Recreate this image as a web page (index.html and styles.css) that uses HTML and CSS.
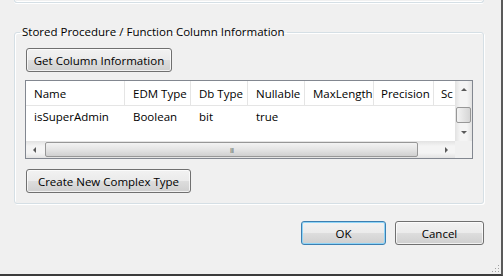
FILE: index.html
```html
<!DOCTYPE html>
<html lang="en">
<head>
    <meta charset="UTF-8">
    <title>Function Import</title>
    <link rel="stylesheet" href="styles.css">
</head>
<body>
    <div class="window">
        <div class="prev-group"></div>

        <fieldset class="group">
            <legend>Stored Procedure / Function Column Information</legend>
            <button class="btn btn-get">Get Column Information</button>

            <div class="grid">
                <div class="grid-main">
                    <div class="grid-view">
                        <div class="row header">
                            <div class="cell">Name</div>
                            <div class="cell">EDM Type</div>
                            <div class="cell">Db Type</div>
                            <div class="cell">Nullable</div>
                            <div class="cell">MaxLength</div>
                            <div class="cell">Precision</div>
                            <div class="cell">Sc</div>
                        </div>
                        <div class="row">
                            <div class="cell">isSuperAdmin</div>
                            <div class="cell">Boolean</div>
                            <div class="cell">bit</div>
                            <div class="cell">true</div>
                            <div class="cell"></div>
                            <div class="cell"></div>
                            <div class="cell"></div>
                        </div>
                    </div>
                    <div class="vscroll">
                        <div class="arrow up"></div>
                        <div class="vtrack"><div class="vthumb"></div></div>
                        <div class="arrow down"></div>
                    </div>
                </div>
                <div class="hscroll-row">
                    <div class="hscroll">
                        <div class="arrow left"></div>
                        <div class="htrack"><div class="hthumb">III</div></div>
                        <div class="arrow right"></div>
                    </div>
                    <div class="corner"></div>
                </div>
            </div>

            <button class="btn btn-create">Create New Complex Type</button>
        </fieldset>

        <div class="actions">
            <button class="btn btn-ok">OK</button>
            <button class="btn btn-cancel">Cancel</button>
        </div>

        <div class="grip"></div>
    </div>
</body>
</html>
```

FILE: styles.css
```css
body {
    margin: 0;
    background: #6b6b6b;
    font-family: "Open Sans", "Noto Sans", sans-serif;
    font-size: 11.5px;
    color: #000;
}
.window {
    position: relative;
    width: 470px;
    height: 274px;
    padding: 0 17px 0 14px;
    background: #f0f0f0;
    border-right: 2px solid #5a5a5a;
    border-bottom: 2px solid #3c3c3c;
}
.prev-group {
    height: 2px;
    border: 1px solid #d5dfe5;
    border-top: none;
    border-radius: 0 0 3px 3px;
    box-shadow: 0 1px 0 #fff, inset 0 -1px 0 #fff;
}
.group {
    min-width: 0;
    margin: 21px 0 0 0;
    padding: 0 10px 10px 10px;
    border: 1px solid #d5dfe5;
    border-radius: 3px;
    box-shadow: inset 1px 1px 0 #fff, 1px 1px 0 #fff;
}
.group legend {
    margin-left: -5px;
    padding: 0 2px;
    line-height: 16px;
}
.btn {
    display: flex;
    align-items: center;
    justify-content: center;
    height: 24px;
    padding: 0;
    font-family: inherit;
    font-size: inherit;
    color: #000;
    border: 1px solid #707070;
    border-radius: 3px;
    background: linear-gradient(#f2f2f2 0%, #ebebeb 48%, #dddddd 52%, #cfcfcf 100%);
    box-shadow: inset 0 0 0 1px rgba(255,255,255,0.7);
}
.btn-get {
    width: 146px;
    margin: 8px 0 0 1px;
}
.btn-create {
    width: 165px;
    margin: 10px 0 0 1px;
}

.grid {
    margin-top: 8px;
    border: 1px solid #828790;
    background: #fff;
}
.grid-main {
    display: flex;
    height: 60px;
}
.grid-view {
    flex: 1;
    min-width: 0;
    overflow: hidden;
}
.row {
    display: grid;
    grid-template-columns: 99px 66px 57px 57px 69px 60px 20px;
    height: 21px;
    align-items: center;
    white-space: nowrap;
}
.row.header {
    height: 24px;
    border-bottom: 1px solid #e5e5e5;
    align-items: stretch;
}
.header .cell {
    display: flex;
    align-items: center;
    border-right: 1px solid #e5e5e5;
}
.header .cell:last-child {
    border-right: none;
}
.cell {
    padding-left: 8px;
    overflow: hidden;
}
.row .cell:nth-child(6),
.row .cell:nth-child(7) {
    padding-left: 7px;
}
.vscroll {
    width: 17px;
    flex-shrink: 0;
    display: flex;
    flex-direction: column;
    background: linear-gradient(90deg, #e2e2e2, #f4f4f4 30%, #f4f4f4 70%, #e2e2e2);
}
.arrow {
    width: 17px;
    height: 17px;
    flex-shrink: 0;
    display: flex;
    align-items: center;
    justify-content: center;
}
.arrow::before {
    content: "";
    width: 0;
    height: 0;
    border: 3px solid transparent;
}
.arrow.up::before {
    border-bottom: 3px solid #5a5a5a;
    border-top-width: 0;
}
.arrow.down::before {
    border-top: 3px solid #5a5a5a;
    border-bottom-width: 0;
}
.arrow.left::before {
    border-right: 3px solid #5a5a5a;
    border-left-width: 0;
}
.arrow.right::before {
    border-left: 3px solid #5a5a5a;
    border-right-width: 0;
}
.vtrack {
    flex: 1;
    display: flex;
    flex-direction: column;
    justify-content: flex-end;
    padding: 0 1px 1px 1px;
}
.vthumb {
    height: 14px;
    border: 1px solid #979797;
    border-radius: 2px;
    background: linear-gradient(90deg, #f3f3f3, #e4e4e4 50%, #d5d5d5);
}
.hscroll-row {
    display: flex;
    height: 17px;
}
.hscroll {
    flex: 1;
    display: flex;
    background: linear-gradient(#e2e2e2, #f4f4f4 30%, #f4f4f4 70%, #e2e2e2);
}
.htrack {
    flex: 1;
    padding: 1px 20px 1px 2px;
}
.hthumb {
    height: 13px;
    border: 1px solid #979797;
    border-radius: 2px;
    background: linear-gradient(#f3f3f3, #e4e4e4 50%, #d0d0d0);
    color: #777;
    font-size: 8px;
    line-height: 13px;
    text-align: center;
    letter-spacing: -1px;
}
.corner {
    width: 17px;
    background: #f0f0f0;
}

.actions {
    display: flex;
    justify-content: flex-end;
    gap: 9px;
    margin-top: 17px;
}
.btn-ok {
    width: 85px;
    border-color: #3c7fb1;
    box-shadow: inset 0 0 0 1px #8ed4f7;
}
.btn-cancel {
    width: 89px;
}
.grip {
    position: absolute;
    right: 2px;
    bottom: 2px;
    width: 8px;
    height: 8px;
    background-image: radial-gradient(circle, #a0a0a0 0.8px, transparent 1px);
    background-size: 3px 3px;
    clip-path: polygon(100% 0, 100% 100%, 0 100%);
}
```
